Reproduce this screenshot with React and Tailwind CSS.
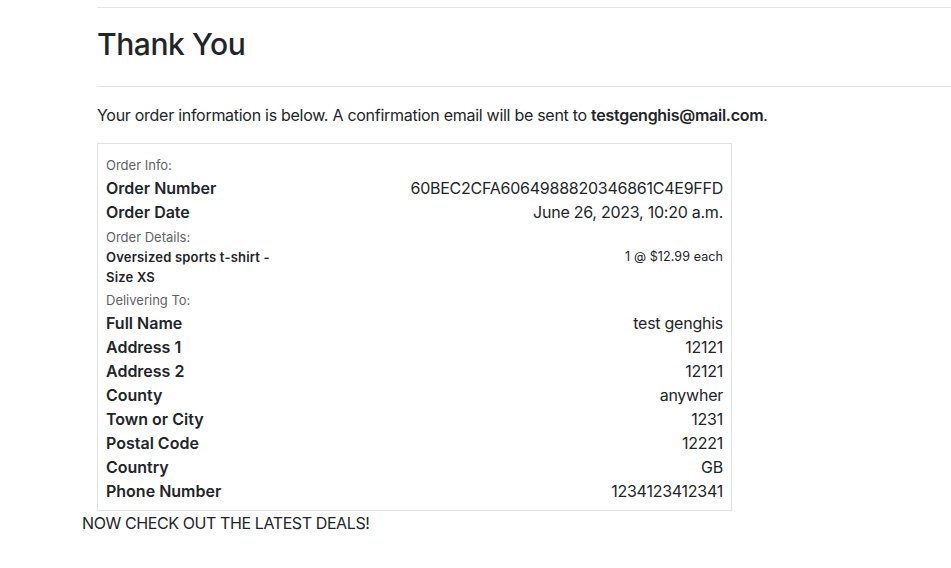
const ORDER_INFO = [
  { label: 'Order Number', value: '60BEC2CFA6064988820346861C4E9FFD' },
  { label: 'Order Date', value: 'June 26, 2023, 10:20 a.m.' },
]

const DELIVERY = [
  { label: 'Full Name', value: 'test genghis' },
  { label: 'Address 1', value: '12121' },
  { label: 'Address 2', value: '12121' },
  { label: 'County', value: 'anywher' },
  { label: 'Town or City', value: '1231' },
  { label: 'Postal Code', value: '12221' },
  { label: 'Country', value: 'GB' },
  { label: 'Phone Number', value: '1234123412341' },
]

function Row({ label, value }) {
  return (
    <div className="flex h-[24px] items-center justify-between text-[16px]">
      <span className="font-semibold tracking-[0px]">{label}</span>
      <span className="tracking-[-0.25px]">{value}</span>
    </div>
  )
}

export default function App() {
  return (
    <div className="min-h-[568px] overflow-hidden bg-white text-[#212529] font-['Inter','Liberation_Sans',sans-serif]">
      <div className="pl-[97px]">
        <div className="mt-[7px] h-px bg-[#e3e5e8]" />
        <h2 className="mt-[18px] h-[36px] text-[30px] font-medium leading-[36px] tracking-[-0.4px]">Thank You</h2>
        <div className="mt-[24px] h-px bg-[#e3e5e8]" />
        <p className="mt-[16px] text-[16px] leading-[24px] tracking-[-0.28px]">
          Your order information is below. A confirmation email will be sent to{' '}
          <strong className="font-semibold">testgenghis@mail.com</strong>.
        </p>

        {/* Order summary box */}
        <div className="mt-[16px] w-[635px] border border-[#dee2e6] px-[8px] pt-[10px] pb-[7px]">
          <div className="h-[22px] text-[13px] leading-[22px] text-[#5f6368]">Order Info:</div>
          {ORDER_INFO.map((r) => (
            <Row key={r.label} {...r} />
          ))}

          <div className="h-[23px] pt-[3px] text-[13px] leading-[20px] text-[#5f6368]">Order Details:</div>
          <div className="flex items-start justify-between text-[13px] leading-[20px]">
            <span className="w-[185px] font-semibold tracking-[0.2px]">Oversized sports t-shirt - Size XS</span>
            <span className="text-[12.5px] tracking-[0.1px]">1 @ $12.99 each</span>
          </div>

          <div className="h-[24px] pt-[3px] text-[13px] leading-[20px] text-[#5f6368]">Delivering To:</div>
          {DELIVERY.map((r) => (
            <Row key={r.label} {...r} />
          ))}
        </div>
      </div>
      <p className="pl-[82px] text-[16px] leading-[24px] tracking-[-0.4px]">NOW CHECK OUT THE LATEST DEALS!</p>
    </div>
  )
}
